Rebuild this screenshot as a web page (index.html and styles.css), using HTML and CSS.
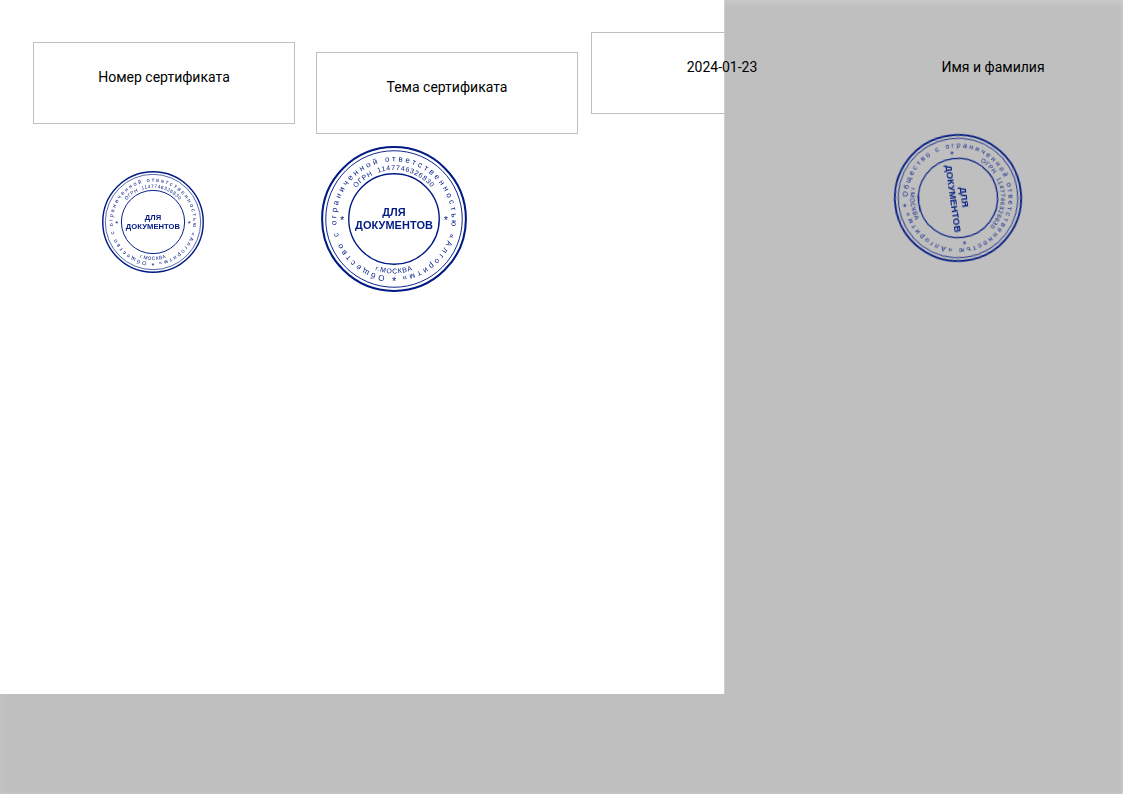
FILE: index.html
```html
<!DOCTYPE html>
<html lang="ru">
<head>
<meta charset="utf-8">
<title>Сертификат</title>
<link rel="stylesheet" href="styles.css">
</head>
<body>
<svg class="defs" width="0" height="0" aria-hidden="true">
  <defs>
    <path id="arc-outer" d="M0 79A79 79 0 1 1 0 -79A79 79 0 1 1 0 79"/>
    <path id="arc-ogrn" d="M-53 -41A67 67 0 0 1 53 -41"/>
    <path id="arc-city" d="M-55 50A74 74 0 0 0 55 50"/>
    <symbol id="stamp" viewBox="-100 -100 200 200">
      <circle class="ring ring-outer" r="98.5"/>
      <circle class="ring ring-thin" r="93.5"/>
      <circle class="ring ring-inner" r="62"/>
      <text class="stamp-text stamp-arc"><textPath href="#arc-outer" startOffset="2.5%" textLength="472" lengthAdjust="spacing">Общество с ограниченной ответственностью «Алгоритм»</textPath></text>
      <text class="stamp-text stamp-small"><textPath href="#arc-ogrn" startOffset="50%" text-anchor="middle">ОГРН  1147746326830</textPath></text>
      <text class="stamp-text stamp-small"><textPath href="#arc-city" startOffset="50%" text-anchor="middle">г.МОСКВА</textPath></text>
      <text class="stamp-text stamp-star" x="-71" y="7">*</text>
      <text class="stamp-text stamp-star" x="71" y="7">*</text>
      <text class="stamp-text stamp-star" x="0" y="90">*</text>
      <text class="stamp-text stamp-title" x="0" y="-4.5">ДЛЯ</text>
      <text class="stamp-text stamp-title" x="0" y="13">ДОКУМЕНТОВ</text>
    </symbol>
  </defs>
</svg>
<main class="canvas">
  <div class="sheet"></div>
  <div class="field field-number">Номер сертификата</div>
  <div class="field field-topic">Тема сертификата</div>
  <div class="field field-date">2024-01-23</div>
  <div class="field field-name">Имя и фамилия</div>
  <svg class="stamp stamp-a"><use href="#stamp"/></svg>
  <svg class="stamp stamp-b"><use href="#stamp"/></svg>
  <svg class="stamp stamp-c"><use href="#stamp"/></svg>
  <div class="edge"></div>
</main>
</body>
</html>
```
FILE: styles.css
```css
html, body {
  margin: 0;
  padding: 0;
}
body {
  background: #bfbfbf;
  font-family: Roboto, "Liberation Sans", sans-serif;
  color: #000;
  overflow: hidden;
}
.defs {
  position: absolute;
}
.canvas {
  position: relative;
  width: 1123px;
  height: 794px;
  overflow: hidden;
}
.sheet {
  width: 724px;
  height: 694px;
  background: #fff;
  border-right: 1px solid #cfcfcf;
}
.edge {
  position: absolute;
  inset: 0;
  pointer-events: none;
  background:
    linear-gradient(to bottom, rgba(255,255,255,.14), rgba(255,255,255,0) 7px),
    linear-gradient(to right, rgba(255,255,255,.06), rgba(255,255,255,0) 8px),
    linear-gradient(to left, rgba(255,255,255,.16), rgba(255,255,255,0) 3px),
    linear-gradient(to top, rgba(255,255,255,.14), rgba(255,255,255,0) 2px);
}
.field {
  position: absolute;
  box-sizing: border-box;
  width: 262px;
  height: 82px;
  padding-top: 26px;
  border: 1px solid #bfbfbf;
  font-size: 14px;
  line-height: 17px;
  text-align: center;
}
.field-number { left: 33px; top: 42px; }
.field-topic { left: 316px; top: 52px; }
.field-date { left: 591px; top: 32px; }
.field-name { left: 862px; top: 32px; }
.stamp {
  position: absolute;
  filter: blur(.25px);
}
.stamp-a { left: 102px; top: 171px; width: 102px; height: 102px; }
.stamp-b { left: 321px; top: 146px; width: 146px; height: 146px; }
.stamp-c { left: 894px; top: 134px; width: 128px; height: 128px; transform: rotate(82deg); }
.ring {
  fill: none;
  stroke: #001a84;
}
.ring-outer { stroke-width: 2.8; }
.ring-thin { stroke-width: 1.3; }
.ring-inner { stroke-width: 1.9; }
.stamp-text {
  font-family: "Liberation Sans", Arial, sans-serif;
  fill: #001a84;
}
.stamp-arc { font-size: 11px; }
.stamp-small { font-size: 9.5px; letter-spacing: 1px; white-space: pre; }
.stamp-star { font-size: 15px; text-anchor: middle; }
.stamp-title {
  font-size: 15px;
  font-weight: 700;
  letter-spacing: .1px;
  text-anchor: middle;
}
```
